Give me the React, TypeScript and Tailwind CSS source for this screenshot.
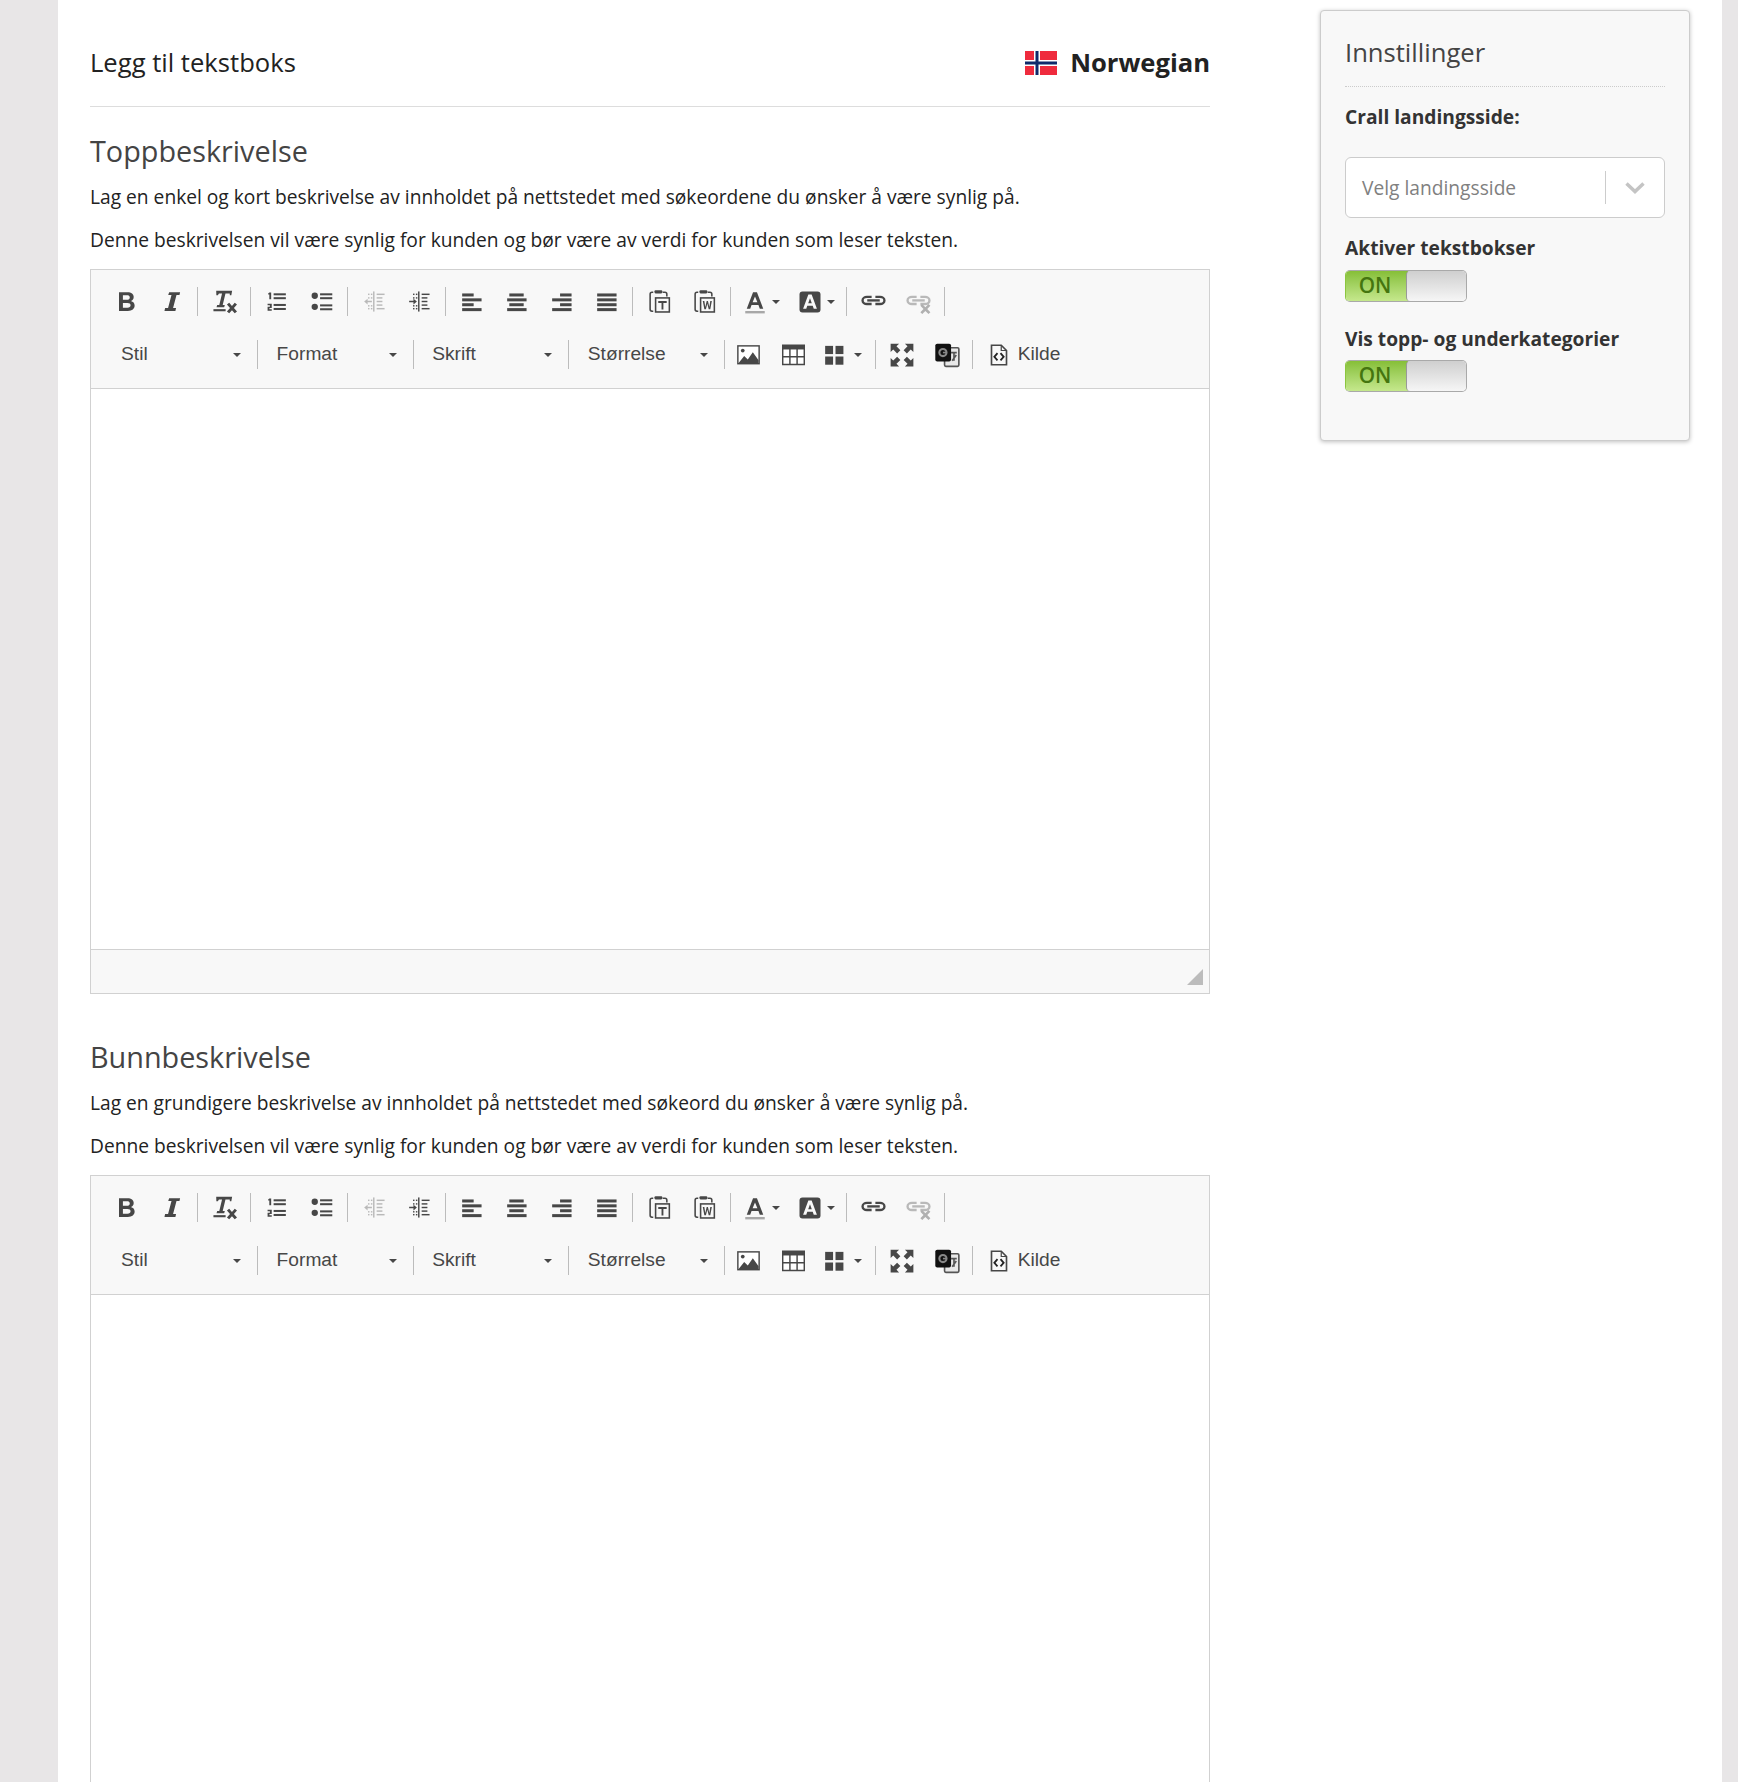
import React from "react";

const C = "#474747";

function Ico({ children, size = 23 }: { children: React.ReactNode; size?: number }) {
  return (
    <svg width={size} height={size} viewBox="0 0 16 16" fill={C}>
      {children}
    </svg>
  );
}

const IBold = () => (
  <Ico size={25}>
    <path fillRule="evenodd" d="M3.200 2h5.400c2.500 0 4 1.100 4 3.100 0 1.300-.7 2.200-1.800 2.600 1.500.4 2.400 1.400 2.400 2.900 0 2.100-1.600 3.400-4.300 3.400H3.200V2zm2.500 2v2.900h2.500c1.200 0 1.900-.5 1.900-1.500S9.400 4 8.200 4H5.700zm0 4.900V12h2.900c1.300 0 2-.6 2-1.600s-.7-1.500-2-1.500H5.700z" />
  </Ico>
);
const IItalic = () => (
  <Ico size={25}>
    <path d="M6.500 2h7l-.4 1.800h-1.900L9 12.200h1.900l-.4 1.800h-7l.4-1.800h1.900l2.200-8.400H5.900L6.500 2z" />
  </Ico>
);
const IClear = () => (
  <Ico size={26}>
    <path d="M3.200 1h9.800l-.5 2.800h-.9l-.1-1H8.900L7.200 9.800h1.300l-.4 1.500H3.400l.4-1.500h1.300l1.700-7H4.900l-.7 1h-.9L3.200 1z" />
    <rect x="1.500" y="12.400" width="7.500" height="1.300" />
    <path d="M9.800 9.600l1.400-1.100 1.700 1.900 1.700-1.900 1.400 1.100-1.900 2.100 1.900 2.100-1.400 1.100-1.700-1.900-1.700 1.900-1.400-1.100 1.900-2.100z" />
  </Ico>
);
const IOl = () => (
  <Ico>
    <path d="M3 1.800h1.300v4.600H3V3.200H2.200v-.8L3 1.800zM1.800 9.600h2.900v3H3.100v.8h1.600v1H1.800v-2.700h1.600V10.600H1.800V9.600z" />
    <rect x="6" y="2.300" width="8.500" height="1.400" />
    <rect x="6" y="5" width="8.500" height="1.400" />
    <rect x="6" y="9.700" width="8.500" height="1.400" />
    <rect x="6" y="12.500" width="8.500" height="1.400" />
  </Ico>
);
const IUl = () => (
  <Ico>
    <circle cx="3.300" cy="4" r="2.200" />
    <circle cx="3.300" cy="11.700" r="2.200" />
    <rect x="7" y="2.300" width="8.500" height="1.400" />
    <rect x="7" y="5" width="8.500" height="1.400" />
    <rect x="7" y="10" width="8.500" height="1.400" />
    <rect x="7" y="12.700" width="8.500" height="1.400" />
  </Ico>
);
const Lines = () => (
  <>
    <rect x="7" y="1" width="1" height="14" />
    <rect x="9.500" y="2.500" width="5.500" height="1" />
    <rect x="9.500" y="5" width="4" height="1" />
    <rect x="9.500" y="7.500" width="4" height="1" />
    <rect x="9.500" y="10" width="4" height="1" />
    <rect x="9.500" y="12.500" width="5.500" height="1" />
    <rect x="3.500" y="2.500" width="1" height="1" />
    <rect x="5.500" y="2.500" width="1" height="1" />
    <rect x="3.500" y="5" width="1" height="1" />
    <rect x="5.500" y="5" width="1" height="1" />
    <rect x="3.500" y="10.500" width="1" height="1" />
    <rect x="5.500" y="10.500" width="1" height="1" />
    <rect x="3.500" y="12.500" width="1" height="1" />
    <rect x="5.500" y="12.500" width="1" height="1" />
  </>
);
const IOutdent = () => (
  <Ico>
    <g opacity="0.35">
      <Lines />
      <path d="M.8 8l2.400-2v1.500h3v1h-3V10z" />
    </g>
  </Ico>
);
const IIndent = () => (
  <Ico>
    <Lines />
    <path d="M6.200 8L3.800 6v1.500h-3v1h3V10z" />
  </Ico>
);
const Bars = ({ w }: { w: [number, number][] }) => (
  <Ico>
    {w.map(([x, width], i) => (
      <rect key={i} x={x} y={2.400 + i * 3.400} width={width} height={2.100} />
    ))}
  </Ico>
);
const ILeft = () => <Bars w={[[1.500, 8], [1.500, 13.500], [1.500, 8], [1.500, 13.500]]} />;
const ICenter = () => <Bars w={[[3, 10], [1.500, 13.500], [3, 10], [1.500, 13.500]]} />;
const IRight = () => <Bars w={[[7, 8], [1.500, 13.500], [7, 8], [1.500, 13.500]]} />;
const IJust = () => <Bars w={[[1.500, 13.500], [1.500, 13.500], [1.500, 13.500], [1.500, 13.500]]} />;

const IPaste = ({ word }: { word?: boolean }) => (
  <Ico size={25}>
    <path
      d="M4 14.200H3.200c-.7 0-1.200-.5-1.200-1.200V3.300c0-.7.5-1.200 1.200-1.200H4M10 2.100h1.500c.7 0 1.200.5 1.200 1.200v1.500"
      fill="none"
      stroke={C}
      strokeWidth="1"
    />
    <rect x="4.800" y="0.800" width="5" height="2" rx="0.700" />
    <rect x="5.500" y="5.700" width="8.800" height="9" fill="none" stroke={C} strokeWidth="1" />
    {word ? (
      <path d="M6.900 7.700h1l.6 3.800.9-3.800h.8l.9 3.800.6-3.800h1l-1 5.200h-1l-.9-3.400-.9 3.400h-1z" />
    ) : (
      <path d="M7.200 7.700h5.400v1.200h-2.100v4.200H9.300V8.900H7.200z" />
    )}
  </Ico>
);
const IColor = () => (
  <Ico size={24}>
    <path fillRule="evenodd" d="M6.700 1.500h2.600L13.500 12.500h-2.300l-.9-2.500H5.700l-.9 2.500H2.500L6.700 1.500zM8 4.400L6.400 8.200h3.200L8 4.400z" />
    <rect x="1.500" y="14" width="13" height="1.600" fill="#a8a8a8" />
  </Ico>
);
const IBg = () => (
  <Ico size={24}>
    <rect x="1" y="1" width="14" height="14" rx="2" />
    <path fill="#f8f8f8" fillRule="evenodd" d="M6.900 3h2.200L12.600 12.500h-2.100l-.7-2H6.200l-.7 2H3.400L6.900 3zM8 5.500L6.800 8.900h2.400L8 5.500z" />
  </Ico>
);
const ILink = ({ off }: { off?: boolean }) => (
  <Ico size={25}>
    <g opacity={off ? 0.35 : 1} fill="none" stroke={C} strokeWidth="1.500">
      <path d="M6.800 5H3.800C2.300 5 1 6 1 7.300s1.300 2.300 2.800 2.300h3" />
      <path d="M9.200 5h3C13.700 5 15 6 15 7.300s-1.300 2.300-2.800 2.300h-3" />
      <path d="M4 7.300h8" />
    </g>
    {off && (
      <path fill="#b0b0b0" d="M9.200 10.700l1.200-1.100 2 2 2-2 1.200 1.100-2 2.100 2 2.100-1.200 1.100-2-2-2 2-1.200-1.100 2-2.100z" />
    )}
  </Ico>
);
const IImage = () => (
  <Ico>
    <rect x="0.600" y="2" width="14.800" height="12.400" fill="#fff" stroke={C} strokeWidth="1" />
    <circle cx="4" cy="5.300" r="1.300" />
    <path d="M1 14l4-5 2.500 2.500L11 6.500l4 5.500V14z" />
  </Ico>
);
const ITable = () => (
  <Ico>
    <path d="M.5 1.500h15v13.500H.5z" fill="#fff" stroke={C} strokeWidth="1" />
    <rect x="0.500" y="1.500" width="15" height="3" />
    <path d="M5.500 4v11M10.500 4v11M.5 9.500h15" stroke={C} strokeWidth="1" fill="none" />
  </Ico>
);
const IGrid = () => (
  <Ico>
    <rect x="1.500" y="2" width="5.500" height="5.700" />
    <rect x="8.700" y="2" width="5.500" height="5.700" />
    <rect x="1.500" y="9.400" width="5.500" height="5.700" />
    <rect x="8.700" y="9.400" width="5.500" height="5.700" />
  </Ico>
);
const IMax = () => (
  <Ico size={26}>
    <path d="M1 1h5.200L4.600 2.600 7 5 5 7 2.600 4.600 1 6.200zM15 1v5.200L13.400 4.600 11 7 9 5l2.400-2.400L9.800 1zM1 15V9.800L2.600 11.400 5 9l2 2-2.400 2.400L6.200 15zM15 15H9.800l1.600-1.600L9 11l2-2 2.400 2.400L15 9.800z" />
  </Ico>
);
const ITrans = () => (
  <Ico size={26}>
    <rect x="6.500" y="3.500" width="8.800" height="11.500" rx="0.800" fill="#e8e8e8" stroke="#555" strokeWidth="1" />
    <path d="M10.500 6.500h3.500M12.300 6.500v5M13.700 8l-2.500 3.500" stroke="#555" strokeWidth="1" fill="none" />
    <rect x="0.800" y="1" width="9.700" height="11" rx="1.200" fill="#111" />
    <circle cx="5.500" cy="6.500" r="2.200" fill="none" stroke="#888" strokeWidth="1.300" />
    <rect x="5.500" y="6" width="2.200" height="1" fill="#888" />
  </Ico>
);
const IDoc = () => (
  <Ico size={24}>
    <path d="M3 1.500h6.500l3.500 3.500v9.500H3z" fill="none" stroke={C} strokeWidth="1.100" />
    <path d="M9.500 1.500V5H13" fill="none" stroke={C} strokeWidth="0.800" />
    <path d="M7 6.800L4.900 9.200 7 11.600M9 6.800l2.100 2.400L9 11.600" fill="none" stroke="#222" strokeWidth="1.200" />
  </Ico>
);

const Caret = () => (
  <span className="w-0 h-0 border-l-[4px] border-r-[4px] border-t-[4px] border-l-transparent border-r-transparent border-t-[#474747]" />
);
const Sep = () => <span className="w-px h-[29px] bg-[#bcbcbc] ml-[3px] mr-[3.500px] shrink-0" />;
const Btn = ({ children }: { children: React.ReactNode }) => (
  <span className="w-[45px] h-[40px] flex items-center justify-center shrink-0">{children}</span>
);
const Drop = ({ children }: { children: React.ReactNode }) => (
  <span className="w-[54.500px] h-[40px] flex items-center pl-[9px] gap-[5px] shrink-0">
    {children}
    <Caret />
  </span>
);
const Combo = ({ label }: { label: string }) => (
  <>
    <span className="w-[153.300px] h-[40px] flex items-center justify-between pl-[17px] pr-[16px] shrink-0 text-[19.200px] text-[#474747]">
      <span>{label}</span>
      <Caret />
    </span>
    <span className="w-px h-[29px] bg-[#bcbcbc] mr-[1.300px] shrink-0" />
  </>
);

function Editor() {
  return (
    <div className="border border-[#d1d1d1] flex flex-col font-['Liberation_Sans',sans-serif]">
      <div className="bg-[#f8f8f8] border-b border-[#d1d1d1] pt-[5px] pb-[7px] pl-[13px]">
        <div className="h-[53px] flex items-center">
          <Btn><IBold /></Btn>
          <Btn><IItalic /></Btn>
          <Sep />
          <Btn><IClear /></Btn>
          <Sep />
          <Btn><IOl /></Btn>
          <Btn><IUl /></Btn>
          <Sep />
          <Btn><IOutdent /></Btn>
          <Btn><IIndent /></Btn>
          <Sep />
          <Btn><ILeft /></Btn>
          <Btn><ICenter /></Btn>
          <Btn><IRight /></Btn>
          <Btn><IJust /></Btn>
          <Sep />
          <Btn><IPaste /></Btn>
          <Btn><IPaste word /></Btn>
          <Sep />
          <Drop><IColor /></Drop>
          <Drop><IBg /></Drop>
          <Sep />
          <Btn><ILink /></Btn>
          <Btn><ILink off /></Btn>
          <Sep />
        </div>
        <div className="h-[53px] flex items-center">
          <Combo label="Stil" />
          <Combo label="Format" />
          <Combo label="Skrift" />
          <Combo label="Størrelse" />
          <Btn><IImage /></Btn>
          <Btn><ITable /></Btn>
          <span className="w-[55.300px] h-[40px] flex items-center pl-[6.500px] gap-[8px] shrink-0">
            <IGrid />
            <Caret />
          </span>
          <Sep />
          <Btn><IMax /></Btn>
          <Btn><ITrans /></Btn>
          <Sep />
          <span className="h-[40px] flex items-center pl-[10px] gap-[7px] text-[19.200px] text-[#474747]">
            <IDoc />
            <span>Kilde</span>
          </span>
        </div>
      </div>
      <div className="bg-white h-[560px]" />
      <div className="bg-[#f8f8f8] border-t border-[#d1d1d1] h-[44px] flex items-end justify-end pr-[6px] pb-[8px]">
        <span className="w-0 h-0 border-l-[16px] border-b-[16px] border-l-transparent border-b-[#bcbcbc]" />
      </div>
    </div>
  );
}

function Section({ title, intro }: { title: string; intro: string }) {
  return (
    <section>
      <h2 className="text-[28.800px] leading-[36px] text-[#444]">{title}</h2>
      <p className="mt-[16px] text-[19.200px] leading-[24px] text-[#222]">{intro}</p>
      <p className="mt-[19px] text-[19.200px] leading-[24px] text-[#222]">
        Denne beskrivelsen vil være synlig for kunden og bør være av verdi for kunden som leser teksten.
      </p>
      <div className="mt-[17px]">
        <Editor />
      </div>
    </section>
  );
}

function Toggle() {
  return (
    <div className="mt-[9.500px] w-[122px] h-[32px] rounded-[5px] flex overflow-hidden border border-[#a9a9a9] border-l-[#8cc63f]">
      <div className="w-[62px] bg-gradient-to-b from-[#86bf36] to-[#c5e88c] flex items-center justify-center pr-[4px] text-[20.800px] font-semibold text-[#44750f]">
        ON
      </div>
      <div className="flex-1 -ml-[2px] rounded-[4px] border-l border-[#999] bg-gradient-to-b from-[#cfcfcf] to-[#f6f6f6]" />
    </div>
  );
}

function Flag() {
  return (
    <svg width="32" height="24" viewBox="0 0 32 24">
      <rect width="32" height="24" fill="#ef2b3d" />
      <rect x="9" width="6" height="24" fill="#fff" />
      <rect y="9" width="32" height="6" fill="#fff" />
      <rect x="10.500" width="3" height="24" fill="#0f2a6b" />
      <rect y="10.500" width="32" height="3" fill="#0f2a6b" />
    </svg>
  );
}

export default function App() {
  return (
    <div className="h-[1782px] overflow-hidden flex bg-[#e8e6e7] font-['Open_Sans',sans-serif]">
      <div className="w-[58px] shrink-0" />
      <div className="w-[1664px] shrink-0 bg-white flex pl-[32px]">
        <main className="w-[1120px] shrink-0">
          <header className="h-[107px] pt-[20px] border-b border-[#dddddd] flex items-center justify-between">
            <h1 className="text-[25.600px] text-[#222]">Legg til tekstboks</h1>
            <div className="flex items-center gap-[13px]">
              <Flag />
              <span className="text-[25.600px] font-bold text-[#222]">Norwegian</span>
            </div>
          </header>
          <div className="mt-[26px]">
            <Section
              title="Toppbeskrivelse"
              intro="Lag en enkel og kort beskrivelse av innholdet på nettstedet med søkeordene du ønsker å være synlig på."
            />
          </div>
          <div className="mt-[45px]">
            <Section
              title="Bunnbeskrivelse"
              intro="Lag en grundigere beskrivelse av innholdet på nettstedet med søkeord du ønsker å være synlig på."
            />
          </div>
        </main>
        <aside className="ml-[110px] mt-[10px] w-[370px] h-[431px] shrink-0 bg-[#f8f8f8] border border-[#cccccc] rounded-[4px] shadow-[0_1px_4px_rgba(0,0,0,0.25)] px-[24px]">
          <h3 className="mt-[24px] text-[25.600px] leading-[36px] text-[#444]">Innstillinger</h3>
          <div className="mt-[15px] border-t border-dotted border-[#cccccc] w-[320px]" />
          <p className="mt-[18px] text-[19.200px] leading-[24px] font-bold text-[#333]">Crall landingsside:</p>
          <div className="mt-[28px] w-[320px] h-[61px] bg-white border border-[#cccccc] rounded-[6px] flex items-center pl-[16px]">
            <span className="flex-1 text-[19.200px] leading-[26px] pt-px text-[#808080]">Velg landingsside</span>
            <span className="w-px h-[33px] bg-[#cccccc]" />
            <span className="w-[58px] flex justify-center">
              <svg width="20" height="12" viewBox="0 0 20 12" fill="none" stroke="#c4c4c4" strokeWidth="3.500">
                <path d="M1.500 1.500L10 9.500L18.500 1.500" />
              </svg>
            </span>
          </div>
          <p className="mt-[18px] text-[19.200px] leading-[24px] font-bold text-[#333]">Aktiver tekstbokser</p>
          <Toggle />
          <p className="mt-[25px] text-[19.200px] leading-[24px] font-bold text-[#333]">Vis topp- og underkategorier</p>
          <Toggle />
        </aside>
      </div>
      <div className="flex-1" />
    </div>
  );
}
